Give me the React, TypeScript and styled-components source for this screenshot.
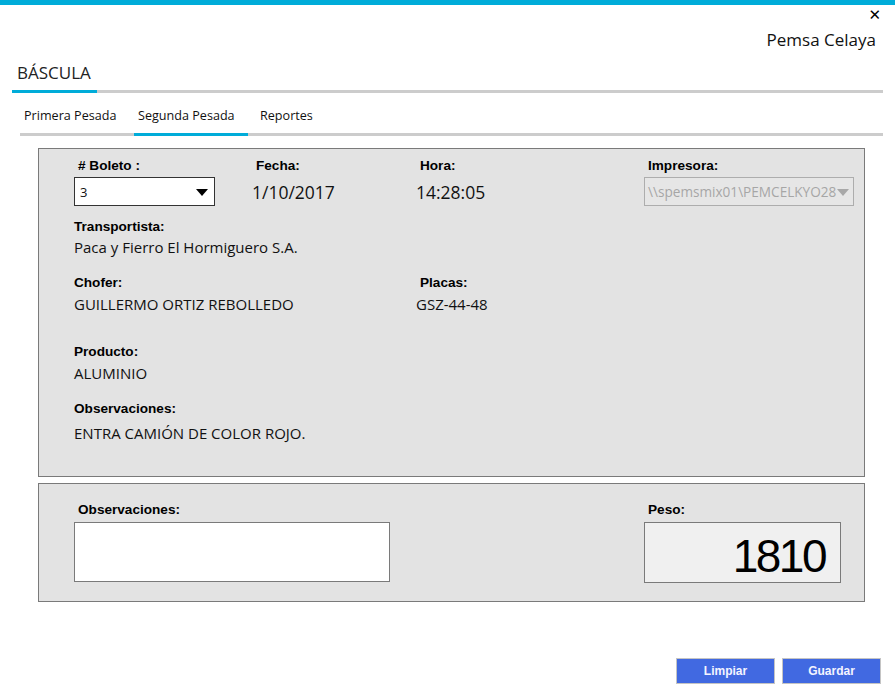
import React from 'react';
import styled, { createGlobalStyle } from 'styled-components';

const GlobalStyle = createGlobalStyle`
  html, body {
    margin: 0;
    padding: 0;
    background: #ffffff;
    overflow: hidden;
  }
  body {
    font-family: 'Open Sans', 'Noto Sans', sans-serif;
    color: #111111;
  }
`;

const Window = styled.div`
  width: 895px;
  height: 687px;
  display: flex;
  flex-direction: column;
`;

const TopBar = styled.div`
  height: 5px;
  background: #00acd9;
`;

const CloseRow = styled.div`
  height: 20px;
  display: flex;
  justify-content: flex-end;
  align-items: center;
  padding-right: 14px;
`;

const CloseButton = styled.span`
  font-family: 'DejaVu Sans', sans-serif;
  font-size: 15px;
  line-height: 20px;
  color: #000;
  cursor: pointer;
`;

const Company = styled.div`
  height: 30px;
  line-height: 30px;
  font-size: 17px;
  text-align: right;
  padding-right: 19px;
  color: #111;
`;

const ModuleBar = styled.div`
  margin: 0 12px;
  display: flex;
  border-bottom: 3px solid #cccccc;
`;

const ModuleTab = styled.div`
  width: 80px;
  padding: 7px 0 6px 5px;
  line-height: 22px;
  font-size: 17px;
  color: #222;
  border-bottom: 3px solid #00acd9;
  margin-bottom: -3px;
`;

const SubTabs = styled.div`
  margin: 0 12px 0 20px;
  display: flex;
  border-bottom: 3px solid #cccccc;
`;

const SubTab = styled.div<{ $active?: boolean; $width?: number; $pad: number }>`
  width: ${(p) => (p.$width ? `${p.$width - p.$pad}px` : 'auto')};
  padding: 13px 0 7px ${(p) => p.$pad}px;
  line-height: 20px;
  font-size: 12.6px;
  color: #111;
  border-bottom: 3px solid ${(p) => (p.$active ? '#00acd9' : 'transparent')};
  margin-bottom: -3px;
`;

const Panel = styled.div<{ $top: number; $height: number }>`
  margin: ${(p) => p.$top}px 0 0 38px;
  width: 790px;
  height: ${(p) => p.$height}px;
  box-sizing: content-box;
  background: #e3e3e3;
  border: 1px solid #7a7a7a;
  padding-left: 35px;
`;

const Row = styled.div<{ $gap: number }>`
  display: grid;
  grid-template-columns: 178px 164px 228px 1fr;
  margin-top: ${(p) => p.$gap}px;
`;

const Field = styled.div`
  display: flex;
  flex-direction: column;
`;

const Label = styled.div<{ $indent?: boolean }>`
  font-family: 'Liberation Sans', Arial, sans-serif;
  font-weight: bold;
  font-size: 13.6px;
  line-height: 16px;
  color: #000;
  padding-left: ${(p) => (p.$indent ? '4px' : '0')};
`;

const Value = styled.div<{ $gap: number }>`
  font-size: 15px;
  line-height: 20px;
  margin-top: ${(p) => p.$gap}px;
  white-space: nowrap;
`;

const BigValue = styled.div`
  margin-top: 3px;
  height: 29px;
  display: flex;
  align-items: center;
  font-size: 17.5px;
  color: #111;
`;

const Select = styled.div<{ $disabled?: boolean }>`
  margin-top: 3px;
  height: 27px;
  box-sizing: content-box;
  display: flex;
  align-items: center;
  position: relative;
  background: ${(p) => (p.$disabled ? '#e6e6e6' : '#ffffff')};
  border: 1px solid ${(p) => (p.$disabled ? '#adadad' : '#333333')};
  padding-left: ${(p) => (p.$disabled ? '3px' : '5px')};
  font-size: ${(p) => (p.$disabled ? '13.6px' : '13px')};
  color: ${(p) => (p.$disabled ? '#a6a6a6' : '#111')};
  overflow: hidden;
  white-space: nowrap;
`;

const Arrow = styled.span<{ $disabled?: boolean }>`
  position: absolute;
  right: ${(p) => (p.$disabled ? '4px' : '6px')};
  top: 11px;
  width: 0;
  height: 0;
  border-left: 6px solid transparent;
  border-right: 6px solid transparent;
  border-top: 7px solid ${(p) => (p.$disabled ? '#a8a8a8' : '#000')};
`;

const BottomGrid = styled.div`
  display: grid;
  grid-template-columns: 570px 197px;
  padding-top: 18px;
`;

const TextArea = styled.textarea`
  margin-top: 4px;
  width: 316px;
  height: 60px;
  box-sizing: border-box;
  border: 1px solid #7a7a7a;
  background: #fff;
  resize: none;
  outline: none;
  font-family: inherit;
`;

const WeightBox = styled.div`
  margin-top: 4px;
  width: 197px;
  height: 61px;
  box-sizing: border-box;
  background: #f0f0f0;
  border: 1px solid #7a7a7a;
  display: flex;
  align-items: center;
  justify-content: flex-end;
  padding: 6px 15px 0 0;
  font-family: 'Liberation Sans', Arial, sans-serif;
  font-size: 46px;
  letter-spacing: -2.5px;
  color: #000;
`;

const Footer = styled.div`
  margin-top: auto;
  margin-bottom: 3px;
  display: flex;
  justify-content: flex-end;
  gap: 7px;
  padding-right: 14px;
`;

const Button = styled.button`
  width: 99px;
  height: 26px;
  background: #4169e1;
  border: 1px solid #c4c4c4;
  color: #f4f4ff;
  font-family: 'Liberation Sans', Arial, sans-serif;
  font-weight: bold;
  font-size: 12px;
  cursor: pointer;
`;

export default function App() {
  return (
    <Window>
      <GlobalStyle />
      <TopBar />
      <CloseRow>
        <CloseButton>✕</CloseButton>
      </CloseRow>
      <Company>Pemsa Celaya</Company>
      <ModuleBar>
        <ModuleTab>BÁSCULA</ModuleTab>
      </ModuleBar>
      <SubTabs>
        <SubTab $width={114} $pad={4}>Primera Pesada</SubTab>
        <SubTab $width={114} $pad={4} $active>Segunda Pesada</SubTab>
        <SubTab $pad={12}>Reportes</SubTab>
      </SubTabs>

      <Panel $top={12} $height={327}>
        <Row $gap={9}>
          <Field>
            <Label $indent># Boleto :</Label>
            <Select style={{ width: '134px' }}>
              3
              <Arrow />
            </Select>
          </Field>
          <Field>
            <Label $indent>Fecha:</Label>
            <BigValue>1/10/2017</BigValue>
          </Field>
          <Field>
            <Label $indent>Hora:</Label>
            <BigValue>14:28:05</BigValue>
          </Field>
          <Field>
            <Label $indent>Impresora:</Label>
            <Select $disabled style={{ width: '205px' }}>
              \\spemsmix01\PEMCELKYO28
              <Arrow $disabled />
            </Select>
          </Field>
        </Row>
        <Row $gap={13}>
          <Field>
            <Label>Transportista:</Label>
            <Value $gap={2}>Paca y Fierro El Hormiguero S.A.</Value>
          </Field>
        </Row>
        <Row $gap={18}>
          <Field style={{ gridColumn: 'span 2' }}>
            <Label>Chofer:</Label>
            <Value $gap={3}>GUILLERMO ORTIZ REBOLLEDO</Value>
          </Field>
          <Field>
            <Label $indent>Placas:</Label>
            <Value $gap={3}>GSZ-44-48</Value>
          </Field>
        </Row>
        <Row $gap={30}>
          <Field>
            <Label>Producto:</Label>
            <Value $gap={3}>ALUMINIO</Value>
          </Field>
        </Row>
        <Row $gap={18}>
          <Field style={{ gridColumn: 'span 2' }}>
            <Label>Observaciones:</Label>
            <Value $gap={6}>ENTRA CAMIÓN DE COLOR ROJO.</Value>
          </Field>
        </Row>
      </Panel>

      <Panel $top={6} $height={117}>
        <BottomGrid>
          <Field>
            <Label $indent>Observaciones:</Label>
            <TextArea />
          </Field>
          <Field>
            <Label $indent>Peso:</Label>
            <WeightBox>1810</WeightBox>
          </Field>
        </BottomGrid>
      </Panel>

      <Footer>
        <Button>Limpiar</Button>
        <Button>Guardar</Button>
      </Footer>
    </Window>
  );
}
